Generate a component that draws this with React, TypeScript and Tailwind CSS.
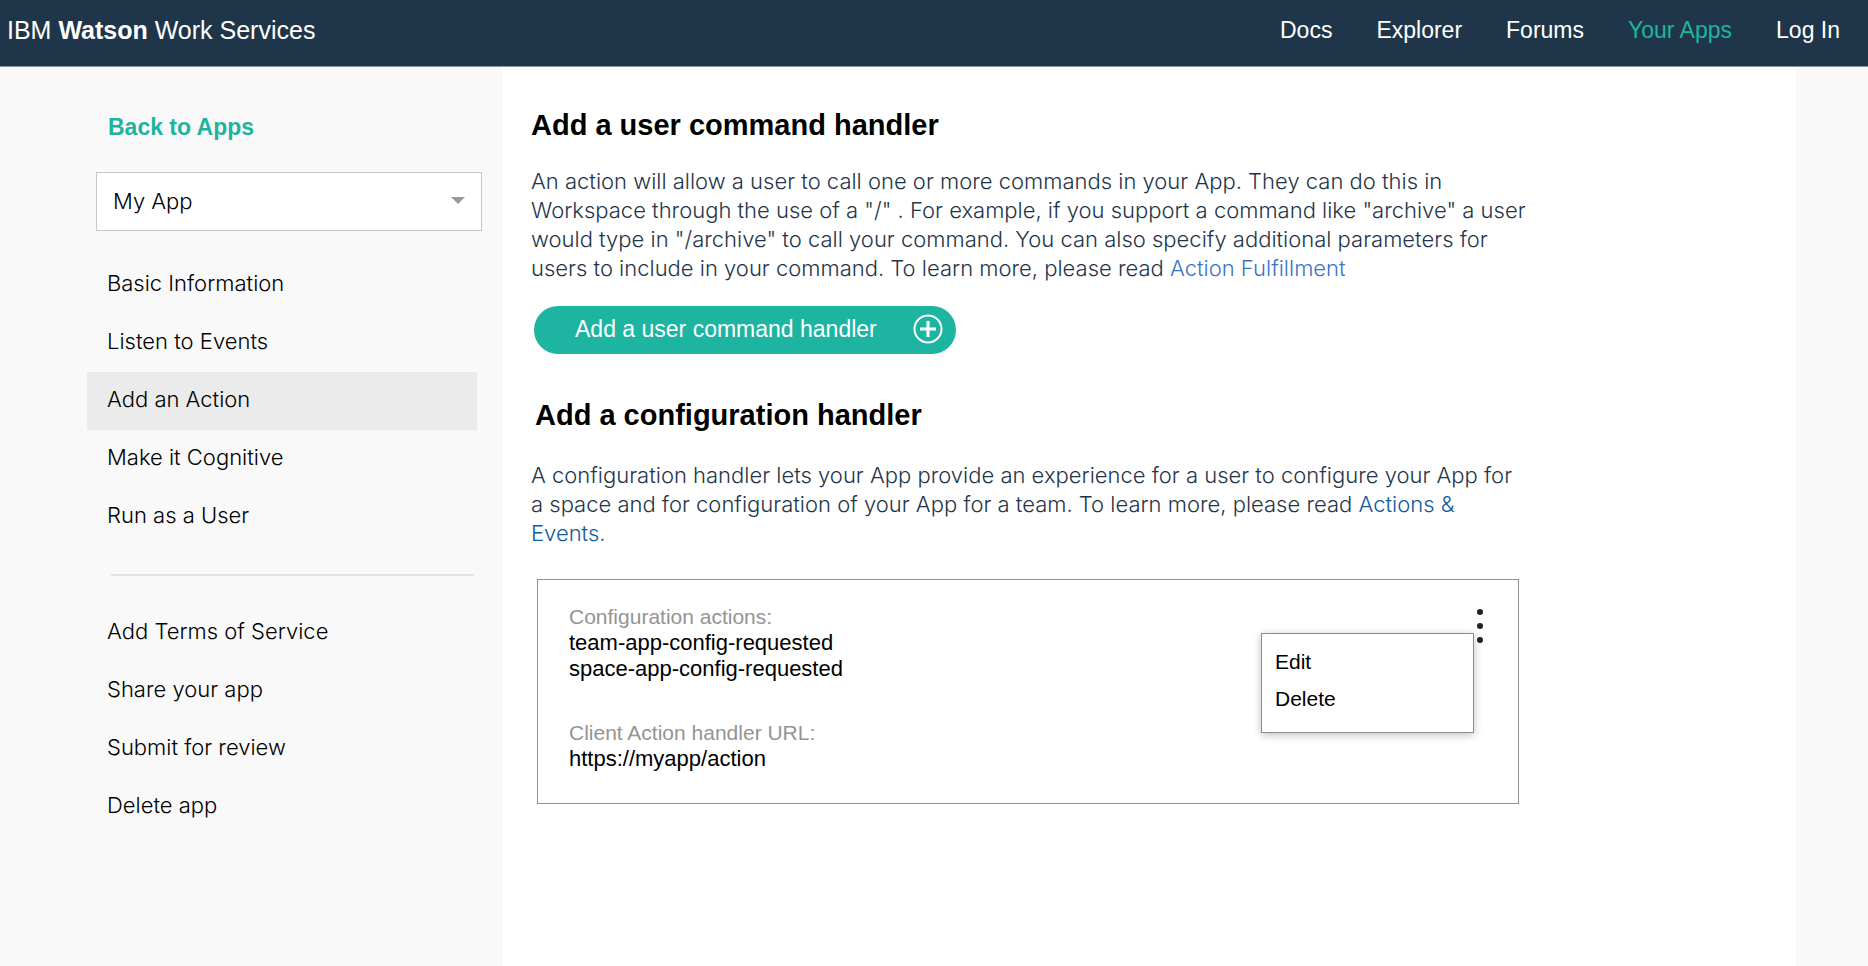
import React from "react";

const topLinks = [
  { label: "Docs", active: false },
  { label: "Explorer", active: false },
  { label: "Forums", active: false },
  { label: "Your Apps", active: true },
  { label: "Log In", active: false },
];

const appLinks = [
  { label: "Basic Information", active: false },
  { label: "Listen to Events", active: false },
  { label: "Add an Action", active: true },
  { label: "Make it Cognitive", active: false },
  { label: "Run as a User", active: false },
];

const manageLinks = [
  { label: "Add Terms of Service", active: false },
  { label: "Share your app", active: false },
  { label: "Submit for review", active: false },
  { label: "Delete app", active: false },
];

type LinkItem = { label: string; active: boolean };

function Header() {
  return (
    <header className="flex h-[67px] items-center justify-between border-b border-[#8795a1] bg-[#1f364a] pr-7 pb-1.5 pl-[7px] text-white">
      <a href="#home" className="text-[25px] leading-8 whitespace-nowrap">
        IBM <span className="font-bold">Watson</span> Work Services
      </a>
      <nav aria-label="Main" className="flex gap-11 text-[23px] leading-8 whitespace-nowrap">
        {topLinks.map((item) => (
          <a key={item.label} href="#top" className={item.active ? "text-[#1db4a0]" : "text-white"}>
            {item.label}
          </a>
        ))}
      </nav>
    </header>
  );
}

function SideList({ items }: { items: LinkItem[] }) {
  return (
    <ul className="mr-[26px] ml-[87px]">
      {items.map((item) => (
        <li key={item.label}>
          <a
            href="#section"
            aria-current={item.active ? "page" : undefined}
            className={
              item.active
                ? "flex h-[58px] items-center bg-[#ebebeb] pb-1 pl-5"
                : "flex h-[58px] items-center pb-1 pl-5"
            }
          >
            {item.label}
          </a>
        </li>
      ))}
    </ul>
  );
}

function Sidebar() {
  return (
    <aside className="w-[503px] shrink-0 pt-[46px] font-['Inter',sans-serif] text-[22px] leading-[29px] font-light text-black">
      <a
        href="#apps"
        className="ml-[108px] block font-['Liberation_Sans',Arial,sans-serif] text-[23px] font-bold text-[#1fb39f]"
      >
        Back to Apps
      </a>
      <div className="relative mt-[30px] mr-[21px] ml-24">
        <select
          aria-label="App"
          className="block h-[59px] w-full appearance-none border border-[#c8c8c8] bg-white px-4 text-black"
        >
          <option>My App</option>
        </select>
        <svg
          aria-hidden="true"
          viewBox="0 0 14 7"
          className="pointer-events-none absolute top-[25px] right-[17px] h-[7px] w-3.5"
        >
          <path d="M0 0h14L7 7z" fill="#999" />
        </svg>
      </div>
      <div className="mt-[25px]">
        <SideList items={appLinks} />
      </div>
      <hr className="mt-7 mr-[29px] mb-7 ml-[111px] border-t-2 border-[#e3e3e3]" />
      <SideList items={manageLinks} />
    </aside>
  );
}

function HandlerCard() {
  return (
    <div className="relative mt-[31px] ml-1.5 flex max-w-[982px] justify-between border border-[#919191] pt-6 pr-[31px] pb-[31px] pl-[31px] leading-[26px]">
      <dl className="text-[22px] text-black">
        <dt className="text-[21px] text-[#949494]">Configuration actions:</dt>
        <dd>team-app-config-requested</dd>
        <dd>space-app-config-requested</dd>
        <dt className="mt-[38px] text-[21px] text-[#949494]">Client Action handler URL:</dt>
        <dd>https://myapp/action</dd>
      </dl>
      <button type="button" aria-label="More options" aria-expanded="true" className="mt-1 h-9 w-3.5">
        <svg viewBox="0 0 14 36" className="h-9 w-3.5" fill="#222">
          <circle cx="7" cy="4" r="3" />
          <circle cx="7" cy="18" r="3" />
          <circle cx="7" cy="32" r="3" />
        </svg>
      </button>
      <div
        role="menu"
        className="absolute top-[53px] right-11 flex h-[100px] w-[213px] flex-col items-start border border-[#8c8c8c] bg-white pt-[9px] pl-[13px] text-[21px] leading-[37px] text-black shadow-[0_2px_8px_rgba(0,0,0,0.25)]"
      >
        <button type="button" role="menuitem">
          Edit
        </button>
        <button type="button" role="menuitem">
          Delete
        </button>
      </div>
    </div>
  );
}

export default function App() {
  return (
    <div className="flex min-h-screen flex-col bg-[#f9f9f9] font-['Liberation_Sans',Arial,sans-serif]">
      <Header />
      <div className="flex flex-1">
        <Sidebar />
        <main className="mr-[72px] min-w-0 flex-1 bg-white pt-[41px] pl-7 text-[22px] leading-[29px] text-[#1f364a]">
          <h1 className="text-[29px] leading-[34px] font-bold text-black">Add a user command handler</h1>
          <p className="mt-[25px] max-w-[1000px] font-['Inter',sans-serif] font-light">
            An action will allow a user to call one or more commands in your App. They can do this in Workspace
            through the use of a "/" . For example, if you support a command like "archive" a user would type in
            "/archive" to call your command. You can also specify additional parameters for users to include in
            your command. To learn more, please read{" "}
            <a href="#fulfillment" className="text-[#3a74c4]">
              Action Fulfillment
            </a>
          </p>
          <button
            type="button"
            className="mt-[23px] ml-[3px] flex h-12 w-[422px] items-center justify-between rounded-full bg-[#1db4a2] pr-3 pb-0.5 pl-[41px] text-[23px] text-white"
          >
            <span>Add a user command handler</span>
            <svg aria-hidden="true" viewBox="0 0 32 32" className="h-8 w-8" fill="none" stroke="#fff">
              <circle cx="16" cy="16" r="13.5" strokeWidth="2" />
              <path d="M16 8v16M8 16h16" strokeWidth="3" />
            </svg>
          </button>
          <h2 className="mt-11 ml-1 text-[29px] leading-[34px] font-bold text-black">
            Add a configuration handler
          </h2>
          <p className="mt-[29px] max-w-[984px] font-['Inter',sans-serif] font-light">
            A configuration handler lets your App provide an experience for a user to configure your App for a
            space and for configuration of your App for a team. To learn more, please read{" "}
            <a href="#events" className="text-[#0f5a9c]">
              Actions &amp; Events.
            </a>
          </p>
          <HandlerCard />
        </main>
      </div>
    </div>
  );
}
